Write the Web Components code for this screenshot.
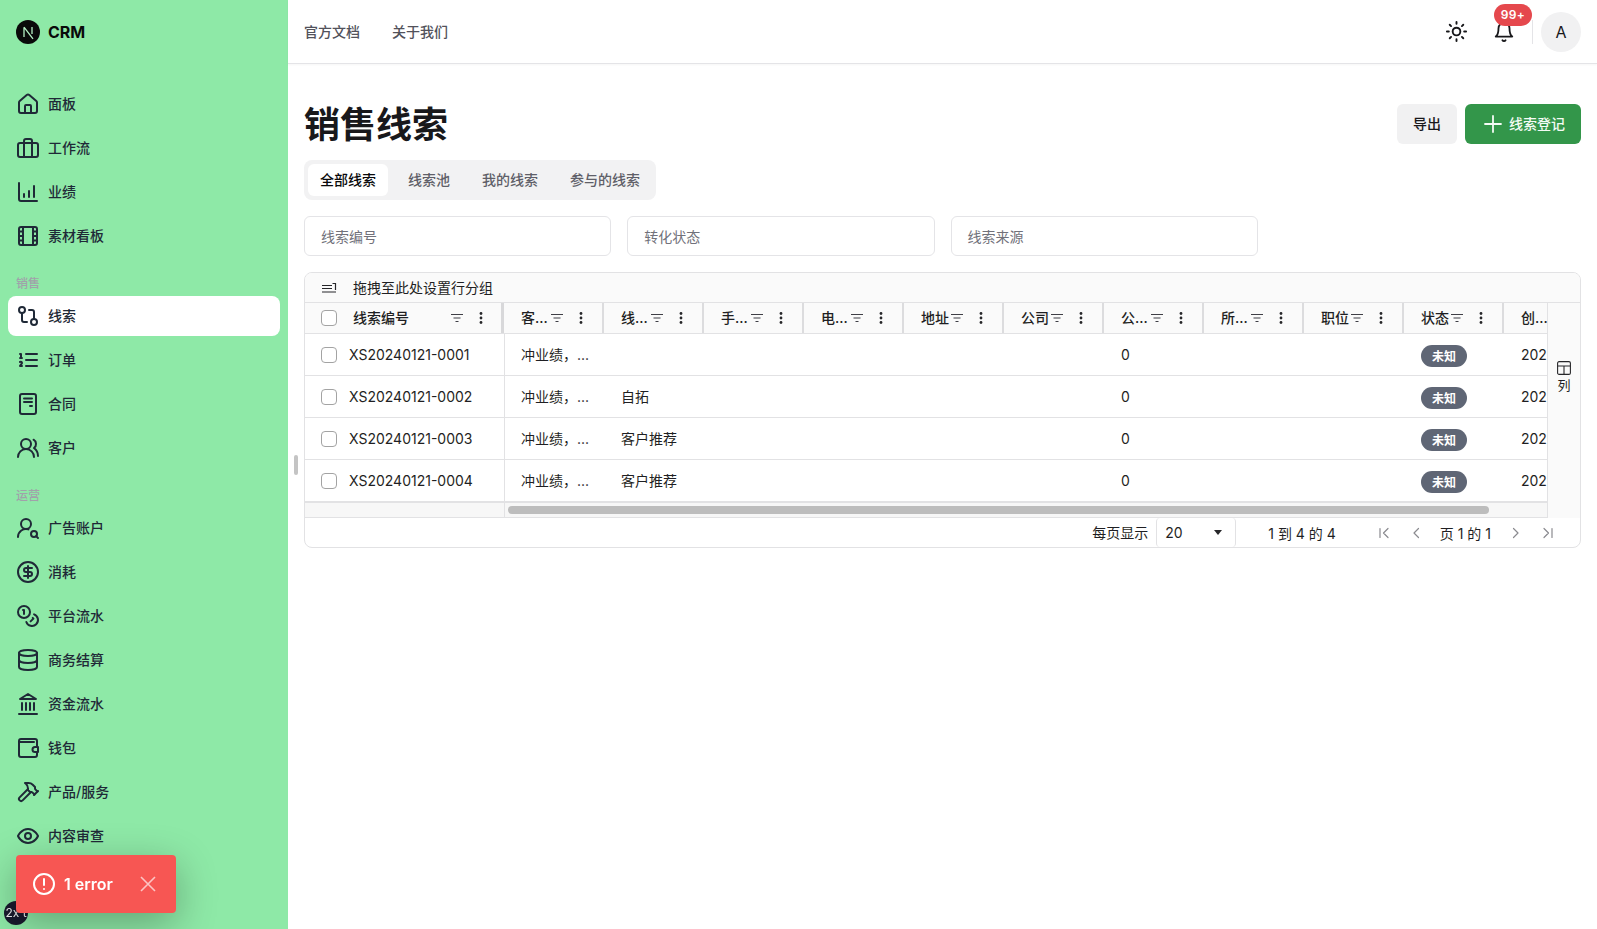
<!DOCTYPE html>
<html lang="zh-CN">
<head>
<meta charset="utf-8">
<title>CRM</title>
<style>
  html, body { margin: 0; height: 100%; overflow: hidden; background: #fff; }
  body { font-family: Inter, "Noto Sans CJK SC", sans-serif; color: #18181b; }
</style>
</head>
<body>
<crm-shell>
  <crm-sidebar slot="side">
    <nav-item icon="home">面板</nav-item>
    <nav-item icon="briefcase">工作流</nav-item>
    <nav-item icon="chart">业绩</nav-item>
    <nav-item icon="film">素材看板</nav-item>
    <nav-label>销售</nav-label>
    <nav-item icon="compare" active>线索</nav-item>
    <nav-item icon="list">订单</nav-item>
    <nav-item icon="doc">合同</nav-item>
    <nav-item icon="users">客户</nav-item>
    <nav-label>运营</nav-label>
    <nav-item icon="usersearch">广告账户</nav-item>
    <nav-item icon="dollar">消耗</nav-item>
    <nav-item icon="coins">平台流水</nav-item>
    <nav-item icon="database">商务结算</nav-item>
    <nav-item icon="landmark">资金流水</nav-item>
    <nav-item icon="wallet">钱包</nav-item>
    <nav-item icon="hammer">产品/服务</nav-item>
    <nav-item icon="eye">内容审查</nav-item>
  </crm-sidebar>
  <crm-topbar slot="top"></crm-topbar>
  <page-head>销售线索</page-head>
  <tab-strip></tab-strip>
  <filter-row></filter-row>
  <lead-grid></lead-grid>
</crm-shell>
<error-toast></error-toast>

<script>
const ICONS = {
  home: '<path d="M3 10.5a2 2 0 0 1 .7-1.5l7-6a2 2 0 0 1 2.6 0l7 6a2 2 0 0 1 .7 1.5V19a2 2 0 0 1-2 2H5a2 2 0 0 1-2-2z"/><path d="M15 21v-7a1 1 0 0 0-1-1h-4a1 1 0 0 0-1 1v7"/>',
  briefcase: '<rect x="2" y="7" width="20" height="14" rx="2"/><path d="M16 21V5a2 2 0 0 0-2-2h-4a2 2 0 0 0-2 2v16"/>',
  chart: '<path d="M3 3v16a2 2 0 0 0 2 2h16"/><path d="M18 17V6"/><path d="M13 17v-6"/><path d="M8 17v-3"/>',
  film: '<rect x="3" y="3" width="18" height="18" rx="2"/><path d="M7 3v18M17 3v18M3 7.5h4M3 12h4M3 16.5h4M17 7.5h4M17 12h4M17 16.5h4"/>',
  compare: '<circle cx="18" cy="18" r="3"/><circle cx="6" cy="6" r="3"/><path d="M13 6h3a2 2 0 0 1 2 2v7"/><path d="M11 18H8a2 2 0 0 1-2-2V9"/>',
  list: '<path d="M10 12h11M10 18h11M10 6h11M4 10h2M4 6h1v4M6 18H4c0-1 2-2 2-3s-1-1.5-2-1"/>',
  doc: '<rect x="4" y="2" width="16" height="20" rx="2"/><path d="M8 6.5h8M8 10h8M14 14h2"/>',
  users: '<path d="M18 21a8 8 0 0 0-16 0"/><circle cx="10" cy="8" r="5"/><path d="M22 20c0-3.37-2-6.5-4-8a5 5 0 0 0-.45-8.3"/>',
  usersearch: '<circle cx="10" cy="8" r="5"/><path d="M2 21a8 8 0 0 1 10.434-7.62"/><circle cx="18" cy="18" r="3"/><path d="m22 22-1.9-1.9"/>',
  dollar: '<circle cx="12" cy="12" r="10"/><path d="M16 8h-6a2 2 0 1 0 0 4h4a2 2 0 1 1 0 4H8"/><path d="M12 18V6"/>',
  coins: '<circle cx="8" cy="8" r="6"/><path d="M18.09 10.37A6 6 0 1 1 10.34 18"/><path d="M7 6h1v4"/><path d="m16.71 13.88.7.71-2.82 2.82"/>',
  database: '<ellipse cx="12" cy="5" rx="9" ry="3"/><path d="M3 5v14a9 3 0 0 0 18 0V5"/><path d="M3 12a9 3 0 0 0 18 0"/>',
  landmark: '<path d="M3 22h18M6 18v-7M10 18v-7M14 18v-7M18 18v-7"/><path d="M12 2l8 5H4z"/>',
  wallet: '<path d="M21 11V5a2 2 0 0 0-2-2H5a2 2 0 0 0-2 2v14a2 2 0 0 0 2 2h14a2 2 0 0 0 2-2v-3"/><path d="M3 6h15"/><path d="M22 11h-3a2.5 2.5 0 0 0 0 5h3z"/>',
  hammer: '<path d="m15 12-8.373 8.373a1 1 0 1 1-3-3L12 9"/><path d="m18 15 4-4"/><path d="m21.5 11.5-1.914-1.914A2 2 0 0 1 19 8.172V7l-2.26-2.26a6 6 0 0 0-4.202-1.756L9 2.96l.92.82A6.18 6.18 0 0 1 12 8.4V10l2 2h1.172a2 2 0 0 1 1.414.586L18.5 14.5"/>',
  eye: '<path d="M2 12s3-7 10-7 10 7 10 7-3 7-10 7-10-7-10-7Z"/><circle cx="12" cy="12" r="3"/>',
  sun: '<circle cx="12" cy="12" r="4"/><path d="M12 2v2M12 20v2M4.93 4.93l1.41 1.41M17.66 17.66l1.41 1.41M2 12h2M20 12h2M6.34 17.66l-1.41 1.41M19.07 4.93l-1.41 1.41"/>',
  bell: '<path d="M6 8a6 6 0 0 1 12 0c0 7 3 9 3 9H3s3-2 3-9"/><path d="M10.3 21a1.94 1.94 0 0 0 3.4 0"/>',
  plus: '<path d="M12 4v16M4 12h16"/>'
};

class CrmIcon extends HTMLElement {
  connectedCallback() {
    const size = this.getAttribute('size') || 24;
    const weight = this.getAttribute('weight') || 2;
    this.attachShadow({ mode: 'open' }).innerHTML = `
      <style>:host { display: block; width: ${size}px; height: ${size}px; flex: none; } svg { display: block; }</style>
      <svg width="${size}" height="${size}" viewBox="0 0 24 24" fill="none" stroke="currentColor" stroke-width="${weight}" stroke-linecap="round" stroke-linejoin="round">${ICONS[this.getAttribute('name')]}</svg>`;
  }
}
customElements.define('crm-icon', CrmIcon);

class CrmShell extends HTMLElement {
  connectedCallback() {
    this.attachShadow({ mode: 'open' }).innerHTML = `
      <style>
        :host { display: flex; height: 100vh; position: relative; }
        .side { width: 288px; flex: none; }
        .main { flex: 1; min-width: 0; display: flex; flex-direction: column; }
        .page { display: flex; flex-direction: column; gap: 16px; padding: 40px 16px 16px; }
        .handle { position: absolute; left: 294px; top: 455px; width: 4px; height: 20px; border-radius: 2px; background: #c4c4c4; }
      </style>
      <div class="side"><slot name="side"></slot></div>
      <div class="main">
        <slot name="top"></slot>
        <div class="page"><slot></slot></div>
      </div>
      <div class="handle"></div>`;
  }
}
customElements.define('crm-shell', CrmShell);

class CrmSidebar extends HTMLElement {
  connectedCallback() {
    this.attachShadow({ mode: 'open' }).innerHTML = `
      <style>
        :host { display: block; height: 100%; background: #8ee9a7; overflow: hidden; }
        .logo { display: flex; align-items: center; gap: 8px; height: 64px; padding-left: 16px; font-size: 16px; font-weight: 700; color: #0a0a0a; }
        nav { display: flex; flex-direction: column; gap: 4px; padding: 20px 8px 0; }
      </style>
      <div class="logo">
        <svg width="24" height="24" viewBox="0 0 24 24">
          <circle cx="12" cy="12" r="12" fill="#0a0a0a"/>
          <path d="M8 17V7.2M8 7.2l9 11.6M16 7v7" stroke="#b4f0c4" stroke-width="1.3" fill="none"/>
        </svg>
        <span>CRM</span>
      </div>
      <nav><slot></slot></nav>`;
  }
}
customElements.define('crm-sidebar', CrmSidebar);

class NavItem extends HTMLElement {
  connectedCallback() {
    this.attachShadow({ mode: 'open' }).innerHTML = `
      <style>
        :host { display: flex; align-items: center; gap: 8px; height: 40px; padding: 0 8px; border-radius: 8px; font-size: 14px; font-weight: 500; color: #1f2937; }
        :host([active]) { background: #fff; }
        span { margin-top: -2px; }
      </style>
      <crm-icon name="${this.getAttribute('icon')}"></crm-icon>
      <span><slot></slot></span>`;
  }
}
customElements.define('nav-item', NavItem);

class NavLabel extends HTMLElement {
  connectedCallback() {
    this.attachShadow({ mode: 'open' }).innerHTML = `
      <style>
        :host { display: flex; align-items: center; box-sizing: border-box; height: 24px; margin: 12px 0 -4px; padding: 0 8px 4px; font-size: 12px; font-weight: 500; color: #a1a1aa; }
      </style>
      <slot></slot>`;
  }
}
customElements.define('nav-label', NavLabel);

class CrmTopbar extends HTMLElement {
  connectedCallback() {
    this.attachShadow({ mode: 'open' }).innerHTML = `
      <style>
        :host { display: flex; align-items: center; box-sizing: border-box; height: 64px; padding: 0 16px; border-bottom: 1px solid #e4e4e7; box-shadow: 0 1px 2px rgba(0,0,0,.04); }
        .links { display: flex; gap: 32px; flex: 1; padding-bottom: 2px; font-size: 14px; font-weight: 500; color: #52525b; }
        .tools { display: flex; align-items: center; color: #18181b; }
        .bell { position: relative; margin-left: 25px; width: 22px; margin-right: 17px; }
        .badge { position: absolute; left: 1px; top: -17px; width: 38px; height: 22px; border-radius: 11px; background: #e5484d; color: #fff; font-size: 12px; font-weight: 600; line-height: 22px; text-align: center; letter-spacing: .3px; }
        .divider { width: 1px; height: 24px; background: #e4e4e7; margin-right: 8px; }
        .avatar { width: 40px; height: 40px; border-radius: 50%; background: #f1f1f2; display: flex; align-items: center; justify-content: center; font-size: 16px; color: #18181b; }
      </style>
      <div class="links"><span>官方文档</span><span>关于我们</span></div>
      <div class="tools">
        <crm-icon name="sun" size="23" weight="2"></crm-icon>
        <div class="bell"><crm-icon name="bell" size="22"></crm-icon><div class="badge">99+</div></div>
        <div class="divider"></div>
        <div class="avatar">A</div>
      </div>`;
  }
}
customElements.define('crm-topbar', CrmTopbar);

class PageHead extends HTMLElement {
  connectedCallback() {
    this.attachShadow({ mode: 'open' }).innerHTML = `
      <style>
        :host { display: flex; align-items: center; height: 40px; gap: 8px; }
        h1 { flex: 1; margin: 2px 0 0; font-size: 36px; line-height: 40px; font-weight: 600; color: #18181b; }
        button { height: 40px; border: 0; border-radius: 6px; font: inherit; font-size: 14px; font-weight: 500; display: flex; align-items: center; padding: 0 0 2px; }
        .plain { width: 60px; justify-content: center; background: #f1f1f2; color: #18181b; }
        .primary { width: 116px; padding-left: 16px; gap: 4px; background: #33964a; color: #f4fbf5; }
        .primary crm-icon { margin-top: 2px; }
      </style>
      <h1><slot></slot></h1>
      <button class="plain">导出</button>
      <button class="primary"><crm-icon name="plus" size="24" weight="1.8"></crm-icon>线索登记</button>`;
  }
}
customElements.define('page-head', PageHead);

class TabStrip extends HTMLElement {
  connectedCallback() {
    const tabs = ['全部线索', '线索池', '我的线索', '参与的线索'];
    this.attachShadow({ mode: 'open' }).innerHTML = `
      <style>
        :host { display: flex; align-self: flex-start; gap: 8px; padding: 4px; height: 40px; box-sizing: border-box; background: #f2f2f3; border-radius: 8px; }
        div { display: flex; align-items: center; padding: 0 12px 2px; border-radius: 6px; font-size: 14px; font-weight: 500; color: #5f5f68; }
        .on { background: #fff; color: #09090b; }
      </style>
      ${tabs.map((t, i) => `<div class="${i === 0 ? 'on' : ''}">${t}</div>`).join('')}`;
  }
}
customElements.define('tab-strip', TabStrip);

class FilterRow extends HTMLElement {
  connectedCallback() {
    const fields = ['线索编号', '转化状态', '线索来源'];
    this.attachShadow({ mode: 'open' }).innerHTML = `
      <style>
        :host { display: grid; grid-template-columns: repeat(4, 1fr); gap: 16px; }
        div { height: 40px; box-sizing: border-box; display: flex; align-items: center; padding: 0 16px 1px; border: 1px solid #e4e4e7; border-radius: 6px; font-size: 14px; color: #71717a; }
      </style>
      ${fields.map(f => `<div>${f}</div>`).join('')}`;
  }
}
customElements.define('filter-row', FilterRow);

class LeadGrid extends HTMLElement {
  connectedCallback() {
    const heads = ['客...', '线...', '手...', '电...', '地址', '公司', '公...', '所...', '职位', '状态', '创...'];
    const rows = [
      ['XS20240121-0001', ''],
      ['XS20240121-0002', '自拓'],
      ['XS20240121-0003', '客户推荐'],
      ['XS20240121-0004', '客户推荐']
    ];
    const filter = `<svg class="filter" width="14" height="14" viewBox="0 0 14 14" fill="none" stroke="#3f3f46" stroke-width="1.1"><path d="M1 3.5h12M3.5 7h7M5.5 10.5h3"/></svg>`;
    const dots = `<svg class="dots" width="14" height="14" viewBox="0 0 14 14" fill="#27272a"><circle cx="7" cy="2.5" r="1.4"/><circle cx="7" cy="7" r="1.4"/><circle cx="7" cy="11.5" r="1.4"/></svg>`;
    const box = `<span class="box"></span>`;
    const page = d => `<svg width="16" height="16" viewBox="0 0 16 16" fill="none" stroke="#8a8a8f" stroke-width="1.2" stroke-linecap="round" stroke-linejoin="round"><path d="${d}"/></svg>`;

    const cells = r => {
      const vals = [['冲业绩，...', 'cjk'], [r[1], 'cjk'], [''], [''], [''], [''], ['0'], [''], [''], ['<span class="pill">未知</span>'], ['202']];
      return vals.map(v => `<div class="c ${v[1] || ''}">${v[0]}</div>`).join('');
    };

    this.attachShadow({ mode: 'open' }).innerHTML = `
      <style>
        :host { display: block; border: 1px solid #e2e2e4; border-radius: 8px; overflow: hidden; font-size: 14px; color: #1f1f23; }
        .group { display: flex; align-items: center; gap: 16px; height: 30px; padding: 0 0 2px 16px; box-sizing: border-box; background: #fafafa; border-bottom: 1px solid #e2e2e4; }
        .body { display: flex; }
        .cols { flex: 1; min-width: 0; overflow: hidden; }
        .side { width: 32px; flex: none; border-left: 1px solid #e2e2e4; background: #fafafa; display: flex; flex-direction: column; align-items: center; padding-top: 58px; gap: 2px; line-height: 16px; font-size: 13px; }
        .h, .r { display: flex; width: max-content; }
        .h { height: 30px; background: #fafafa; border-bottom: 1px solid #e2e2e4; font-weight: 500; }
        .r { height: 41px; border-bottom: 1px solid #e2e2e4; }
        .r.last { border-bottom-width: 2px; }
        .pin { width: 199px; box-sizing: border-box; display: flex; align-items: center; padding-left: 16px; }
        .h .pin { border-right: 3px solid #d8d8da; }
        .r .pin { width: 200px; border-right: 1px solid #e2e2e4; gap: 12px; }
        .r .pin + .c { width: 99px; padding-left: 16px; }
        .h .t { margin-top: -2px; }
        .h .pin .t { flex: 1; margin-left: 16px; }
        .h .pin .dots { margin: 0 13px 0 10px; }
        .hc { width: 100px; box-sizing: border-box; display: flex; align-items: center; padding-left: 17px; border-right: 2px solid #dcdcde; }
        .hc .t { width: 29px; white-space: nowrap; }
        .hc .dots { margin-left: 10px; }
        .c { width: 100px; box-sizing: border-box; display: flex; align-items: center; padding-left: 17px; white-space: nowrap; overflow: hidden; }
        .c.cjk { padding-bottom: 2px; }
        .box { width: 16px; height: 16px; box-sizing: border-box; border: 1px solid #a3a3a3; border-radius: 4px; background: #fff; flex: none; }
        .pill { display: inline-flex; align-items: center; justify-content: center; width: 46px; height: 22px; margin: 2px 0 0 0; padding-bottom: 1px; box-sizing: border-box; border-radius: 11px; background: #5f6675; color: #fff; font-size: 12px; font-weight: 700; }
        .scroll { display: flex; height: 14px; background: #f7f7f7; border-bottom: 1px solid #e2e2e4; }
        .scroll .l { width: 199px; border-right: 1px solid #e2e2e4; flex: none; }
        .thumb { width: 981px; height: 8px; margin: 3px 0 0 3px; border-radius: 4px; background: #bdbdbd; }
        .foot { display: flex; align-items: center; justify-content: flex-end; gap: 16px; height: 29px; padding-right: 24px; }
        .foot .cjk { margin-top: -2px; }
        .sel { width: 80px; height: 29px; box-sizing: border-box; display: flex; align-items: center; justify-content: space-between; padding: 0 13px 0 8px; margin-left: -8px; border: 1px solid #e2e2e4; border-width: 0 1px; border-radius: 4px; }
        .caret { width: 0; height: 0; border: 4px solid transparent; border-top: 5px solid #27272a; border-bottom: 0; }
        .sum { margin: 0 24px 0 16px; }
        .pg { margin-right: 1px; }
        svg { display: block; flex: none; }
      </style>
      <div class="group">
        <svg width="16" height="14" viewBox="0 0 16 14" fill="none" stroke="#27272a" stroke-width="1.2"><path d="M1 5.5h10M1 8.5h10M1 12h14M11.5 3.5h3V10"/></svg>
        <span>拖拽至此处设置行分组</span>
      </div>
      <div class="body">
        <div class="cols">
          <div class="h">
            <div class="pin">${box}<span class="t">线索编号</span>${filter}${dots}</div>
            ${heads.map(h => `<div class="hc"><span class="t">${h}</span>${filter}${dots}</div>`).join('')}
          </div>
          ${rows.map((r, i) => `<div class="r ${i === 3 ? 'last' : ''}"><div class="pin">${box}<span>${r[0]}</span></div>${cells(r)}</div>`).join('')}
          <div class="scroll"><div class="l"></div><div class="thumb"></div></div>
        </div>
        <div class="side">
          <svg width="14" height="14" viewBox="0 0 14 14" fill="none" stroke="#27272a" stroke-width="1.1"><rect x=".6" y=".6" width="12.8" height="12.8" rx="1.5"/><path d="M.6 5h12.8M7 5v8.4"/></svg>
          <span>列</span>
        </div>
      </div>
      <div class="foot">
        <span class="cjk">每页显示</span>
        <div class="sel"><span>20</span><span class="caret"></span></div>
        <span class="sum">1 到 4 的 4</span>
        ${page('M4 3.5v9M12 3.5 7.5 8l4.5 4.5')}
        ${page('M10.5 3.5 6 8l4.5 4.5')}
        <span class="pg">页 1 的 1</span>
        ${page('M5.5 3.5 10 8l-4.5 4.5')}
        ${page('M12 3.5v9M4 3.5 8.5 8 4 12.5')}
      </div>`;
  }
}
customElements.define('lead-grid', LeadGrid);

class ErrorToast extends HTMLElement {
  connectedCallback() {
    this.attachShadow({ mode: 'open' }).innerHTML = `
      <style>
        :host { position: fixed; left: 0; bottom: 0; width: 200px; height: 90px; font-family: Inter, sans-serif; }
        .dev { position: absolute; left: 4px; top: 62px; width: 24px; height: 24px; border-radius: 50%; background: #1a1a2e; color: #eee; font-size: 12px; line-height: 24px; text-align: center; white-space: nowrap; overflow: hidden; }
        .toast { position: absolute; left: 16px; top: 16px; width: 160px; height: 58px; box-sizing: border-box; padding-left: 17px; display: flex; align-items: center; border-radius: 4px; background: #f75653; color: #fff; box-shadow: 0 11px 40px rgba(0,0,0,.3); font-size: 16px; font-weight: 600; }
        .toast span { margin-left: 9px; width: 65px; }
        .toast svg { display: block; flex: none; }
        .x { margin-left: 10px; opacity: .65; }
      </style>
      <div class="dev">2x t</div>
      <div class="toast">
        <svg width="22" height="22" viewBox="0 0 22 22" fill="none" stroke="#fff" stroke-width="2" stroke-linecap="round"><circle cx="11" cy="11" r="10"/><path d="M11 6v6M11 16v.01"/></svg>
        <span>1 error</span>
        <svg class="x" width="18" height="18" viewBox="0 0 18 18" fill="none" stroke="#fff" stroke-width="1.6"><path d="M2 2l14 14M16 2 2 16"/></svg>
      </div>`;
  }
}
customElements.define('error-toast', ErrorToast);
</script>
</body>
</html>
